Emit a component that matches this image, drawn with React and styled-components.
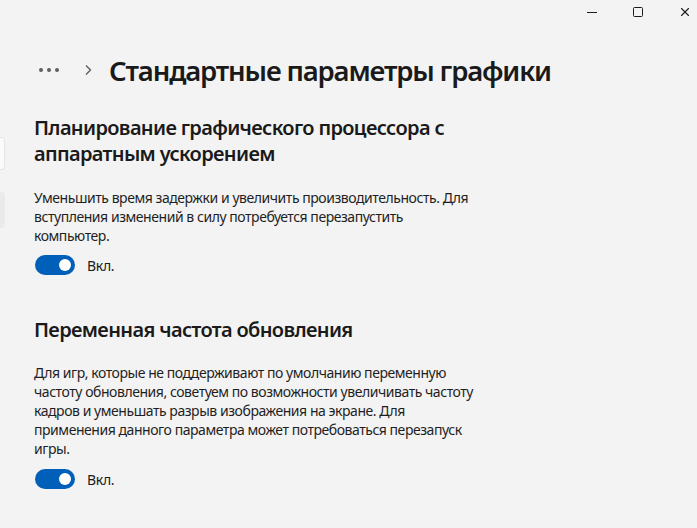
import React from "react";
import styled, { createGlobalStyle } from "styled-components";
import { X } from "lucide-react";

const GlobalStyle = createGlobalStyle`
  html, body {
    margin: 0;
    padding: 0;
    background: #f3f3f3;
    overflow: hidden;
  }
  body {
    font-family: "Noto Sans", "Open Sans", sans-serif;
    color: #1b1b1b;
  }
`;

const Window = styled.div`
  width: 100%;
  height: 528px;
  background: #f3f3f3;
  display: flex;
  flex-direction: column;
  overflow: hidden;
`;

const TitleBar = styled.div`
  height: 24px;
  display: flex;
  justify-content: flex-end;
  align-items: center;
`;

const CaptionButton = styled.div`
  flex-shrink: 0;
  width: ${(p) => p.$width || 46}px;
  height: 24px;
  display: flex;
  align-items: center;
  justify-content: ${(p) => (p.$edge ? "flex-end" : "center")};
  padding-right: ${(p) => (p.$edge ? 5 : 0)}px;
  box-sizing: border-box;
  color: #1b1b1b;
`;

const Body = styled.div`
  flex: 1;
  display: flex;
`;

const Sidebar = styled.div`
  width: 5px;
  display: flex;
  flex-direction: column;
  align-items: flex-end;
  padding-top: 113px;
  gap: 22px;
`;

const SearchStub = styled.div`
  width: 4px;
  height: 31px;
  background: #fbfbfb;
  border: 1px solid #e5e5e5;
  border-left: none;
  border-radius: 0 4px 4px 0;
`;

const NavStub = styled.div`
  width: 5px;
  height: 36px;
  background: #eaeaea;
  border-radius: 0 4px 4px 0;
`;

const Content = styled.div`
  flex: 1;
  padding-left: 29px;
`;

const Breadcrumb = styled.div`
  display: flex;
  align-items: center;
  height: 40px;
  margin-top: 26px;
`;

const More = styled.div`
  display: flex;
  gap: 4px;
  margin-left: 5px;
  margin-right: 25px;
`;

const Dot = styled.span`
  width: 4px;
  height: 4px;
  border-radius: 50%;
  background: #5f5f5f;
`;

const Chevron = styled.svg`
  margin-right: 17px;
`;

const PageTitle = styled.h1`
  margin: 0;
  font-size: 27.5px;
  font-weight: 600;
  letter-spacing: -1.15px;
  color: #1a1a1a;
`;

const Section = styled.section`
  margin-top: ${(p) => p.$top}px;
`;

const Heading = styled.h2`
  margin: 0;
  width: 430px;
  font-size: 20px;
  font-weight: 600;
  line-height: 26px;
  letter-spacing: -0.65px;
  color: #1a1a1a;
`;

const Description = styled.p`
  margin: ${(p) => p.$gap}px 0 0;
  width: ${(p) => p.$width}px;
  font-size: 14px;
  line-height: 19px;
  letter-spacing: -0.45px;
  color: #1f1f1f;
`;

const ToggleRow = styled.div`
  display: flex;
  align-items: center;
  gap: 12px;
  margin-top: ${(p) => p.$gap}px;
  margin-left: 1px;
`;

const Track = styled.div`
  width: 40px;
  height: 20px;
  border-radius: 10px;
  background: #005fb8;
  display: flex;
  align-items: center;
  justify-content: flex-end;
  padding-right: 4px;
  box-sizing: border-box;
`;

const Knob = styled.div`
  width: 12px;
  height: 12px;
  border-radius: 50%;
  background: #ffffff;
`;

const ToggleLabel = styled.span`
  font-size: 14px;
  letter-spacing: -0.3px;
  color: #1b1b1b;
`;

function Toggle({ gap }) {
  return (
    <ToggleRow $gap={gap}>
      <Track>
        <Knob />
      </Track>
      <ToggleLabel>Вкл.</ToggleLabel>
    </ToggleRow>
  );
}

export default function App() {
  return (
    <Window>
      <GlobalStyle />
      <TitleBar>
        <CaptionButton>
          <svg width="10" height="10" viewBox="0 0 10 10">
            <path d="M0 5.5h10" stroke="currentColor" strokeWidth="1" />
          </svg>
        </CaptionButton>
        <CaptionButton>
          <svg width="10" height="10" viewBox="0 0 10 10">
            <rect x="0.5" y="0.5" width="9" height="9" rx="1" fill="none" stroke="currentColor" />
          </svg>
        </CaptionButton>
        <CaptionButton $width={36} $edge>
          <X size={14} strokeWidth={1.1} absoluteStrokeWidth color="#1b1b1b" />
        </CaptionButton>
      </TitleBar>
      <Body>
        <Sidebar>
          <SearchStub />
          <NavStub />
        </Sidebar>
        <Content>
          <Breadcrumb>
            <More>
              <Dot />
              <Dot />
              <Dot />
            </More>
            <Chevron width="8" height="12" viewBox="0 0 8 12">
              <path d="M2 1.5l4.5 4.5L2 10.5" fill="none" stroke="#5f5f5f" strokeWidth="1.4" />
            </Chevron>
            <PageTitle>Стандартные параметры графики</PageTitle>
          </Breadcrumb>

          <Section $top={25}>
            <Heading>Планирование графического процессора с аппаратным ускорением</Heading>
            <Description $width={440} $gap={21}>
              Уменьшить время задержки и увеличить производительность. Для вступления изменений в
              силу потребуется перезапустить компьютер.
            </Description>
            <Toggle gap={10} />
          </Section>

          <Section $top={42}>
            <Heading>Переменная частота обновления</Heading>
            <Description $width={452} $gap={20}>
              Для игр, которые не поддерживают по умолчанию переменную частоту обновления, советуем
              по возможности увеличивать частоту кадров и уменьшать разрыв изображения на экране.
              Для применения данного параметра может потребоваться перезапуск игры.
            </Description>
            <Toggle gap={11} />
          </Section>
        </Content>
      </Body>
    </Window>
  );
}
